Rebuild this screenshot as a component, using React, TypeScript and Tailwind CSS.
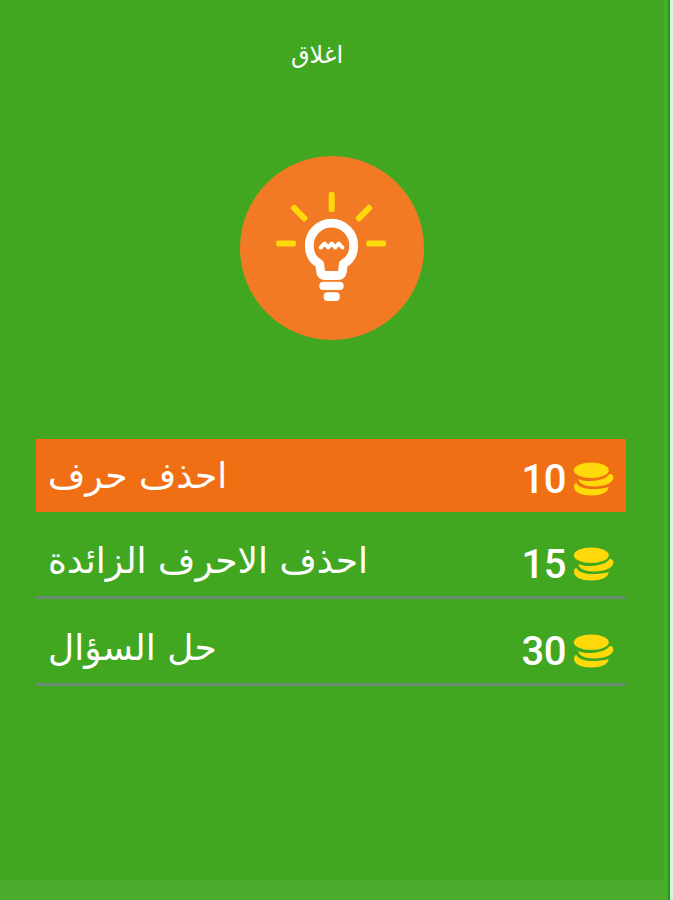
function Bulb() {
  return (
    <svg className="block h-[184px] w-[184px]" viewBox="240 156 184 184" fill="none" strokeLinecap="round" strokeLinejoin="round">
      <circle cx="332" cy="248" r="92" fill="#f27a24" />
      <g fill="#ffd90a">
        <rect x="276.2" y="240.4" width="19.8" height="6" rx="2" />
        <rect x="366.2" y="240.4" width="19.8" height="6" rx="2" />
        <rect x="328.7" y="192" width="6" height="20" rx="2" />
        <rect x="289.2" y="210.1" width="20" height="6" rx="2" transform="rotate(45 299.2 213.1)" />
        <rect x="354" y="210.1" width="20" height="6" rx="2" transform="rotate(-45 364 213.1)" />
      </g>
      <path
        d="M319.7 264C313 260.5 309.3 253.5 309.3 245.3A22.2 22.2 0 0 1 353.7 245.3C353.7 253.5 350 260.5 343.3 264L342.4 271.5C341.9 274.3 340.5 275.5 338.2 275.5H324.8C322.5 275.5 321.1 274.3 320.6 271.5Z"
        stroke="#fff"
        strokeWidth="8.8"
      />
      <path d="M320.8 247.5L324.7 243.5L328.2 247.5L331.7 243.5L335.2 247.5L338.7 243.5L342.4 247.5" stroke="#fff" strokeWidth="4" />
      <rect x="319.3" y="281.8" width="24.4" height="8.3" rx="4" fill="#fff" />
      <rect x="323.6" y="292.2" width="16.2" height="8.8" rx="4" fill="#fff" />
    </svg>
  );
}

function Coins() {
  return (
    <svg className="block h-[34px] w-[41px]" viewBox="0 0 41 34" fill="#ffd90a">
      <ellipse cx="18.3" cy="8.3" rx="17.5" ry="7.7" />
      <path d="M5.5 17C8.500 18.500 12.500 19.200 17.500 19C26 18.700 33.500 16.800 36.800 11.800C39.500 12 40.900 14 40.300 16.500C39 21.500 31 24.400 22 24.400C12.500 24.400 5.500 22 5.500 17Z" />
      <path d="M3.300 20.700C5 25 12 27 20 27C26 27 31 26.500 35.500 25C35.700 30 28 33.500 18.500 33.500C8.500 33.500 1 30 1 25C1 23 1.500 21.500 3.300 20.700Z" />
    </svg>
  );
}

const options = [
  { label: 'احذف حرف', cost: 10, row: 'h-[73px] bg-[#f06f14]', top: 'pt-[15px]' },
  { label: 'احذف الاحرف الزائدة', cost: 15, row: 'h-[87px] border-b-[3px] border-[#688c78]', top: 'pt-[27px]' },
  { label: 'حل السؤال', cost: 30, row: 'h-[87px] border-b-[3px] border-[#688c78]', top: 'pt-[27px]' },
];

export default function App() {
  return (
    <div className="flex h-[900px] w-[673px] overflow-hidden bg-[#d9f5df] font-['DejaVu_Sans',sans-serif] text-white">
      <div className="flex w-[664px] flex-col">
        <main className="flex h-[880px] flex-col items-center bg-[#42a720]">
          <button className="mt-[38px] h-[34px] -translate-x-[15px] text-[24px] leading-[34px]" dir="rtl">اغلاق</button>
          <div className="mt-[84px]">
            <Bulb />
          </div>
          <ul className="mt-[99px] w-[590px] -translate-x-[1px]">
            {options.map(({ label, cost, row, top }) => (
              <li key={cost} className={`flex items-start justify-between pr-3 pl-3 ${row} ${top}`}>
                <span dir="rtl" className="text-[36px] leading-[44px] whitespace-nowrap">{label}</span>
                <span className="flex items-center gap-[7px] pt-[2px]">
                  <span className="translate-y-px font-['Roboto',sans-serif] text-[40px] leading-[46px] font-medium tracking-[-0.5px]">{cost}</span>
                  <Coins />
                </span>
              </li>
            ))}
          </ul>
        </main>
        <div className="h-5 bg-[#4bad2b]" />
      </div>
      <div className="w-1 bg-[#4bad2b]" />
      <div className="w-[2px] bg-[#18a018]" />
    </div>
  );
}
